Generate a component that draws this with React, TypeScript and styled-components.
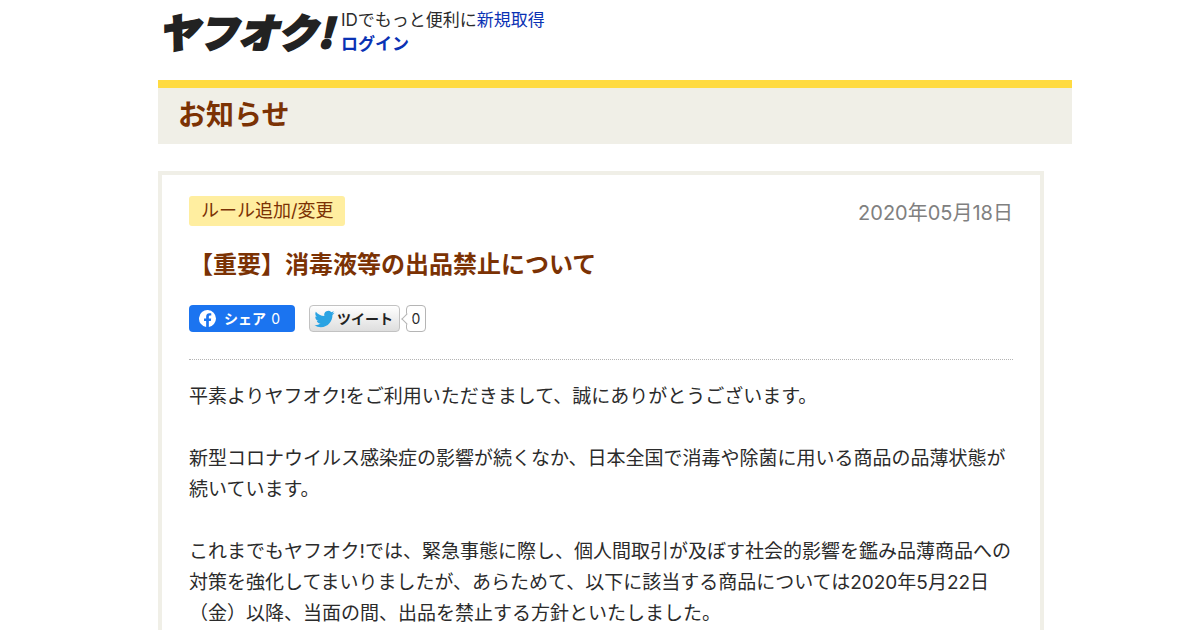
import React from "react";
import styled, { createGlobalStyle } from "styled-components";

const Global = createGlobalStyle`
  * { box-sizing: border-box; }
  body {
    margin: 0;
    background: #fff;
    color: #2b2b2b;
    font-family: Inter, "Noto Sans CJK JP", sans-serif;
  }
  h1, h2, p { margin: 0; }
`;

const Page = styled.div`
  height: 100vh;
  overflow: hidden;
  padding: 0 128px 0 158px;
`;

const Header = styled.header`
  display: flex;
  height: 80px;
  padding: 8px 0 0;
`;

const Logo = styled.a`
  width: 183px;
  color: #222;
  font-family: "Noto Sans CJK JP", sans-serif;
  font-size: 40px;
  font-weight: 900;
  font-style: italic;
  line-height: 46px;
  white-space: nowrap;
  text-decoration: none;
  -webkit-text-stroke: 2px #222;
`;

const Account = styled.div`
  font-size: 17px;
  line-height: 24px;
  white-space: nowrap;
`;

const Link = styled.a<{ $bold?: boolean }>`
  color: #0a32b4;
  font-weight: ${(p) => (p.$bold ? 700 : 400)};
  text-decoration: none;
`;

const Banner = styled.div`
  border-top: 8px solid #ffdb42;
  background: #f0efe7;
  padding: 0 20px 2px;
`;

const BannerTitle = styled.h1`
  color: #7b3204;
  font-size: 28px;
  font-weight: 700;
  line-height: 54px;
`;

const Card = styled.main`
  margin: 27px 28px 0 0;
  border: 4px solid #f0efe7;
  padding: 21px 27px 40px;
`;

const Meta = styled.div`
  display: flex;
  justify-content: space-between;
  align-items: flex-start;
  height: 30px;
`;

const Tag = styled.span`
  border-radius: 3px;
  background: #ffeea0;
  color: #7b3204;
  padding: 0 11px 0 12px;
  font-size: 18px;
  line-height: 30px;
`;

const PostDate = styled.time`
  padding-top: 2px;
  color: #808080;
  font-size: 20px;
  line-height: 30px;
`;

const Title = styled.h2`
  margin-top: 21px;
  color: #7b3204;
  font-size: 24px;
  font-weight: 700;
  line-height: 36px;
`;

const Social = styled.div`
  display: flex;
  align-items: center;
  margin-top: 22px;
  padding-bottom: 27px;
  border-bottom: 1px dotted #b4b4b4;
`;

const ShareButton = styled.button`
  display: flex;
  align-items: center;
  width: 106px;
  height: 27px;
  margin: 0 14px 0 0;
  border: 0;
  border-radius: 4px;
  padding: 0 10px;
  gap: 8px;
  background: #1b74f0;
  color: #fff;
  font: 700 14px/27px Inter, "Noto Sans CJK JP", sans-serif;
  white-space: nowrap;
`;

const ShareCount = styled.span`
  margin-left: 2px;
  font-weight: 400;
`;

const TweetButton = styled.button`
  display: flex;
  align-items: center;
  width: 91px;
  height: 27px;
  border: 1px solid #c2c2c2;
  border-radius: 4px;
  padding: 0 4px;
  gap: 2px;
  background: linear-gradient(#fff, #dedede);
  color: #222;
  font: 700 14px/25px Inter, "Noto Sans CJK JP", sans-serif;
  white-space: nowrap;
`;

const CountBubble = styled.span`
  position: relative;
  width: 20px;
  height: 27px;
  margin-left: 6px;
  border: 1px solid #b5b5b5;
  border-radius: 4px;
  background: #fff;
  font-size: 14px;
  line-height: 25px;
  text-align: center;

  &::before {
    content: "";
    position: absolute;
    left: -4px;
    top: 9px;
    width: 7px;
    height: 7px;
    border: solid #b5b5b5;
    border-width: 0 0 1px 1px;
    background: #fff;
    transform: rotate(45deg);
  }
`;

const Body = styled.div`
  display: grid;
  gap: 31px;
  margin-top: 21px;
  font-size: 19px;
  line-height: 31px;
  white-space: nowrap;
`;

const FacebookIcon = () => (
  <svg width="17" height="17" viewBox="0 0 24 24" aria-hidden="true">
    <path
      fill="#fff"
      d="M24 12a12 12 0 1 0-13.900 11.900v-8.400H7.100V12h3V9.400c0-3 1.800-4.700 4.500-4.700 1.300 0 2.700.2 2.700.2v3h-1.500c-1.500 0-1.900.9-1.900 1.900V12h3.300l-.5 3.500h-2.800v8.400A12 12 0 0 0 24 12z"
    />
  </svg>
);

const TwitterIcon = () => (
  <svg width="21" height="20" viewBox="0 0 24 24" aria-hidden="true">
    <path
      fill="#2aa3e3"
      d="M23.950 4.570a10 10 0 0 1-2.820.77 4.960 4.960 0 0 0 2.160-2.720c-.95.56-2 .96-3.130 1.180a4.920 4.920 0 0 0-8.380 4.480C7.690 8.090 4.070 6.130 1.640 3.160a4.820 4.820 0 0 0-.67 2.480c0 1.710.87 3.210 2.190 4.100a4.900 4.900 0 0 1-2.230-.62v.06a4.920 4.920 0 0 0 3.950 4.830 5 5 0 0 1-2.210.08 4.940 4.940 0 0 0 4.600 3.420A9.870 9.870 0 0 1 0 19.540a13.990 13.990 0 0 0 7.550 2.210c9.050 0 14-7.500 14-13.990 0-.21 0-.42-.02-.63a9.940 9.940 0 0 0 2.460-2.550z"
    />
  </svg>
);

export default function App() {
  return (
    <>
      <Global />
      <Page>
        <Header>
          <Logo href="#">ヤフオク!</Logo>
          <Account>
            <div>
              IDでもっと便利に<Link href="#">新規取得</Link>
            </div>
            <Link href="#" $bold>
              ログイン
            </Link>
          </Account>
        </Header>
        <Banner>
          <BannerTitle>お知らせ</BannerTitle>
        </Banner>
        <Card>
          <Meta>
            <Tag>ルール追加/変更</Tag>
            <PostDate dateTime="2020-05-18">2020年05月18日</PostDate>
          </Meta>
          <Title>【重要】消毒液等の出品禁止について</Title>
          <Social>
            <ShareButton type="button">
              <FacebookIcon />
              <span>
                シェア <ShareCount>0</ShareCount>
              </span>
            </ShareButton>
            <TweetButton type="button">
              <TwitterIcon />
              ツイート
            </TweetButton>
            <CountBubble>0</CountBubble>
          </Social>
          <Body>
            <p>平素よりヤフオク!をご利用いただきまして、誠にありがとうございます。</p>
            <p>
              新型コロナウイルス感染症の影響が続くなか、日本全国で消毒や除菌に用いる商品の品薄状態が
              <br />
              続いています。
            </p>
            <p>
              これまでもヤフオク!では、緊急事態に際し、個人間取引が及ぼす社会的影響を鑑み品薄商品への
              <br />
              対策を強化してまいりましたが、あらためて、以下に該当する商品については2020年5月22日
              <br />
              （金）以降、当面の間、出品を禁止する方針といたしました。
            </p>
          </Body>
        </Card>
      </Page>
    </>
  );
}
